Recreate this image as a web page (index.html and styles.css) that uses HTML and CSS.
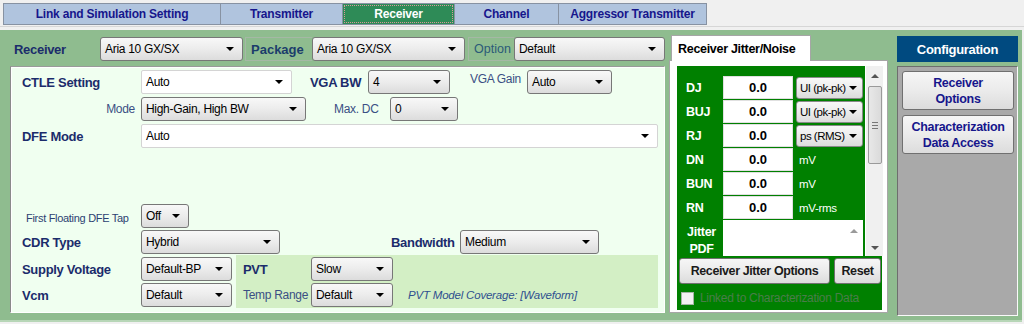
FILE: index.html
```html
<!DOCTYPE html>
<html>
<head>
  <title>Receiver</title>
  <link rel="stylesheet" href="styles.css">
</head>
<body>
  <div class="tabs">
    <div class="tab t-link">Link and Simulation Setting</div>
    <div class="tab t-tx">Transmitter</div>
    <div class="tab t-rx active">Receiver</div>
    <div class="tab t-ch">Channel</div>
    <div class="tab t-ag">Aggressor Transmitter</div>
  </div>

  <div class="main">
    <div class="setup">
      <div class="toprow">
        <div class="lbl top-rx">Receiver</div>
        <div class="combo w143">Aria 10 GX/SX</div>
        <div class="boxlbl pkg">Package</div>
        <div class="combo w153">Aria 10 GX/SX</div>
        <div class="boxlbl opt">Option</div>
        <div class="combo w151">Default</div>
      </div>

      <div class="rx-panel">
        <div class="row">
          <div class="lbl col1">CTLE Setting</div>
          <div class="combo white w151">Auto</div>
          <div class="lbl vgabw">VGA BW</div>
          <div class="combo w82">4</div>
          <div class="lbl-s vgagain">VGA Gain</div>
          <div class="combo w85">Auto</div>
        </div>
        <div class="row mt3">
          <div class="lbl-s col1 right">Mode</div>
          <div class="combo w165">High-Gain, High BW</div>
          <div class="lbl-s maxdc">Max. DC</div>
          <div class="combo w68">0</div>
        </div>
        <div class="row mt3">
          <div class="lbl col1">DFE Mode</div>
          <div class="combo white w516">Auto</div>
        </div>
        <div class="row mt56">
          <div class="lbl-s col1 small">First Floating DFE Tap</div>
          <div class="combo w48">Off</div>
        </div>
        <div class="row mt2">
          <div class="lbl col1">CDR Type</div>
          <div class="combo w139">Hybrid</div>
          <div class="lbl bw">Bandwidth</div>
          <div class="combo w139">Medium</div>
        </div>
        <div class="bottom">
          <div class="bottom-left">
            <div class="row">
              <div class="lbl col1">Supply Voltage</div>
              <div class="combo w91">Default-BP</div>
            </div>
            <div class="row mt2">
              <div class="lbl col1">Vcm</div>
              <div class="combo w91">Default</div>
            </div>
          </div>
          <div class="pvt-band">
            <div class="row">
              <div class="lbl pvtl">PVT</div>
              <div class="combo w82">Slow</div>
            </div>
            <div class="row mt2">
              <div class="lbl-s pvtl">Temp Range</div>
              <div class="combo w82">Default</div>
              <div class="coverage">PVT Model Coverage: [Waveform]</div>
            </div>
          </div>
        </div>
      </div>
    </div>

    <div class="jitter">
      <div class="jtab">Receiver Jitter/Noise</div>
      <div class="jbody">
        <div class="jscroll">
          <div class="jlist">
            <div class="jrow">
              <div class="jlbl">DJ</div>
              <div class="jin">0.0</div>
              <div class="combo junit">UI (pk-pk)</div>
            </div>
            <div class="jrow">
              <div class="jlbl">BUJ</div>
              <div class="jin">0.0</div>
              <div class="combo junit">UI (pk-pk)</div>
            </div>
            <div class="jrow">
              <div class="jlbl">RJ</div>
              <div class="jin">0.0</div>
              <div class="combo junit">ps (RMS)</div>
            </div>
            <div class="jrow">
              <div class="jlbl">DN</div>
              <div class="jin">0.0</div>
              <div class="unit">mV</div>
            </div>
            <div class="jrow">
              <div class="jlbl">BUN</div>
              <div class="jin">0.0</div>
              <div class="unit">mV</div>
            </div>
            <div class="jrow">
              <div class="jlbl">RN</div>
              <div class="jin">0.0</div>
              <div class="unit">mV-rms</div>
            </div>
            <div class="jrow pdf">
              <div class="jlbl two">Jitter<br>PDF</div>
              <div class="pdfbox"><span class="uparrow"></span></div>
            </div>
          </div>
          <div class="vscroll">
            <span class="uparrow"></span>
            <div class="thumb"><span class="grip"></span></div>
            <span class="downarrow"></span>
          </div>
        </div>
        <div class="jbottom">
          <div class="btnrow">
            <div class="btn rjo">Receiver Jitter Options</div>
            <div class="btn reset">Reset</div>
          </div>
          <div class="linked">
            <span class="check"></span>
            <span>Linked to Characterization Data</span>
          </div>
        </div>
      </div>
    </div>

    <div class="config">
      <div class="chead">Configuration</div>
      <div class="cbody">
        <div class="cbtn">Receiver<br>Options</div>
        <div class="cbtn">Characterization<br>Data Access</div>
      </div>
    </div>
  </div>
</body>
</html>
```

FILE: styles.css
```css
body {
  margin: 0;
  background: #f0f0f0;
  font-family: "Liberation Sans", Arial, sans-serif;
  width: 1024px;
  height: 324px;
  overflow: hidden;
}

/* top tabs */
.tabs {
  display: flex;
  padding: 3px 0 0 3px;
  height: 23px;
  border-bottom: 1px solid #d6d6d6;
}

.tab {
  height: 22px;
  box-sizing: border-box;
  border: 1px solid #8792a2;
  background: #b0c4de;
  color: #16168c;
  font-weight: bold;
  font-size: 12px;
  letter-spacing: -0.2px;
  display: flex;
  align-items: center;
  justify-content: center;
  margin-right: -1px;
}

.tab.active {
  background: #2e8b57;
  color: #fff;
  outline: 1px dotted #d89a9a;
  outline-offset: -3px;
}

.t-link { width: 218px; }
.t-tx { width: 123px; }
.t-rx { width: 113px; }
.t-ch { width: 105px; }
.t-ag { width: 149px; }

/* main green area */
.main {
  display: flex;
  margin-top: 3px;
  width: 1022px;
  height: 292px;
  background: #8fbc8f;
  padding-left: 10px;
  box-sizing: border-box;
  border-bottom: 2px solid #b7d6b7;
}

.setup {
  width: 655px;
  margin-top: 7px;
}

.toprow {
  display: flex;
  align-items: center;
  height: 24px;
}

.lbl {
  font-weight: bold;
  font-size: 13px;
  color: #1b2c6b;
  letter-spacing: -0.3px;
  white-space: nowrap;
}

.lbl-s {
  font-size: 12px;
  color: #3a4f84;
  letter-spacing: -0.3px;
  white-space: nowrap;
}

.top-rx {
  width: 90px;
  padding-left: 4px;
  box-sizing: border-box;
  flex-shrink: 0;
}

.boxlbl {
  height: 24px;
  box-sizing: border-box;
  border: 1px solid #a5b8a5;
  border-right: none;
  display: flex;
  align-items: center;
  padding-left: 5px;
  font-size: 13px;
  color: #1b3c6b;
  flex-shrink: 0;
}

.pkg {
  width: 67px;
  margin-left: 2px;
  font-weight: bold;
}

.opt {
  width: 46px;
  margin-left: 3px;
  color: #2b5a78;
  font-size: 12.5px;
}

/* combo boxes */
.combo {
  height: 24px;
  box-sizing: border-box;
  border: 1px solid #777;
  border-radius: 3px;
  background: linear-gradient(#f8f8f8, #ececec 50%, #dcdcdc);
  display: flex;
  align-items: center;
  padding-left: 4px;
  font-size: 12px;
  letter-spacing: -0.3px;
  color: #000;
  flex-shrink: 0;
  white-space: nowrap;
}

.combo::after {
  content: "";
  border-left: 4px solid transparent;
  border-right: 4px solid transparent;
  border-top: 4px solid #000;
  margin-left: auto;
  margin-right: 8px;
}

.combo.white {
  background: #fff;
  border-color: #d4d4d4;
  border-radius: 2px;
}

.w48 { width: 48px; }
.w68 { width: 68px; }
.w82 { width: 82px; }
.w85 { width: 85px; }
.w91 { width: 91px; }
.w139 { width: 139px; }
.w143 { width: 143px; }
.w151 { width: 151px; }
.w153 { width: 153px; }
.w165 { width: 165px; }
.w516 { width: 517px; }

/* receiver settings panel */
.rx-panel {
  margin-top: 5px;
  width: 655px;
  height: 247px;
  box-sizing: border-box;
  background: #f0fff0;
  border: 1px solid;
  border-color: #9a9a9a #fff #fff #8a8a8a;
  box-shadow: inset 1px 1px 0 #ffffff;
  padding: 3px 0 0 11px;
}

.row {
  display: flex;
  align-items: center;
  height: 24px;
}

.mt2 { margin-top: 2px; }
.mt3 { margin-top: 3px; }
.mt56 { margin-top: 56px; }

.col1 {
  width: 119px;
  flex-shrink: 0;
}

.right {
  text-align: right;
  padding-right: 6px;
  box-sizing: border-box;
}

.small {
  font-size: 11px;
  color: #2c3f72;
  padding-left: 4px;
  box-sizing: border-box;
  padding-top: 4px;
}

.vgabw { width: 58px; margin-left: 18px; }
.vgagain { width: 57px; margin-left: 20px; margin-bottom: 6px; }
.maxdc { width: 56px; margin-left: 28px; }
.bw { width: 69px; margin-left: 111px; }

.bottom {
  display: flex;
  margin-top: 1px;
}

.bottom-left {
  width: 214px;
  padding-top: 2px;
}

.pvt-band {
  width: 422px;
  height: 53px;
  background: #d3efc5;
  padding: 2px 0 0 7px;
  box-sizing: border-box;
}

.pvtl { width: 68px; }

.coverage {
  margin-left: 15px;
  font-size: 11.5px;
  font-style: italic;
  color: #2f4f8f;
  letter-spacing: -0.2px;
}

/* jitter/noise tab */
.jitter {
  width: 219px;
  margin: 5px 0 0 4px;
  display: flex;
  flex-direction: column;
}

.jtab {
  width: 140px;
  height: 26px;
  margin-left: 2px;
  background: #fff;
  border: 1px solid #a6a6a6;
  border-bottom: none;
  box-sizing: border-box;
  display: flex;
  align-items: center;
  padding-left: 6px;
  font-weight: bold;
  font-size: 12.5px;
  letter-spacing: -0.3px;
  position: relative;
  z-index: 1;
}

.jbody {
  height: 253px;
  margin-top: -1px;
  background: #fff;
  border: 1px solid #a6a6a6;
  box-sizing: border-box;
  padding: 5px 0 0 7px;
}

.jscroll {
  display: flex;
  height: 190px;
}

.jlist {
  width: 188px;
  background: #008000;
  padding-top: 10px;
  box-sizing: border-box;
  overflow: hidden;
}

.jrow {
  display: flex;
  align-items: center;
  height: 23px;
  margin-bottom: 1px;
}

.jlbl {
  width: 46px;
  flex-shrink: 0;
  padding-left: 9px;
  box-sizing: border-box;
  color: #fff;
  font-weight: bold;
  font-size: 12.5px;
  letter-spacing: -0.3px;
}

.jlbl.two {
  padding-left: 3px;
  text-align: center;
  line-height: 17px;
  padding-top: 4px;
}

.jin {
  width: 70px;
  height: 23px;
  box-sizing: border-box;
  background: #fff;
  border: 1px solid #e0e0e0;
  display: flex;
  align-items: center;
  justify-content: center;
  font-weight: bold;
  font-size: 13px;
  flex-shrink: 0;
}

.junit {
  width: 67px;
  height: 22px;
  margin-left: 3px;
  padding-left: 3px;
  border-color: #8a8a8a;
  font-size: 11.5px;
  letter-spacing: -0.5px;
}

.junit::after {
  margin-right: 5px;
}

.unit {
  margin-left: 6px;
  color: #fff;
  font-size: 11.5px;
  letter-spacing: -0.3px;
}

.jrow.pdf {
  height: 40px;
  align-items: flex-start;
  margin-top: 1px;
}

.pdfbox {
  width: 140px;
  height: 40px;
  background: #fff;
  display: flex;
  justify-content: flex-end;
  padding: 9px 5px 0 0;
  box-sizing: border-box;
}

.uparrow {
  width: 0;
  height: 0;
  border-left: 4px solid transparent;
  border-right: 4px solid transparent;
  border-bottom: 4px solid #9a9a9a;
}

.downarrow {
  width: 0;
  height: 0;
  border-left: 4px solid transparent;
  border-right: 4px solid transparent;
  border-top: 4px solid #555;
  margin-top: auto;
  margin-bottom: 6px;
}

.vscroll {
  width: 17px;
  margin-left: 1px;
  background: #f0f0f0;
  display: flex;
  flex-direction: column;
  align-items: center;
  padding-top: 8px;
  box-sizing: border-box;
}

.vscroll .uparrow {
  border-bottom-color: #555;
}

.thumb {
  width: 14px;
  height: 78px;
  margin-top: 8px;
  box-sizing: border-box;
  border: 1px solid #9a9a9a;
  border-radius: 2px;
  background: linear-gradient(to right, #e8e8e8, #dadada);
  display: flex;
  align-items: center;
  justify-content: center;
}

.grip {
  width: 6px;
  height: 5px;
  border-top: 1px solid #777;
  border-bottom: 1px solid #777;
  background: linear-gradient(#777, #777) center / 6px 1px no-repeat;
}

.jbottom {
  width: 205px;
  height: 54px;
  background: #008000;
  padding: 2px 0 0 2px;
  box-sizing: border-box;
}

.btnrow {
  display: flex;
  gap: 4px;
}

.btn {
  height: 26px;
  box-sizing: border-box;
  border: 1px solid #707070;
  border-radius: 3px;
  background: linear-gradient(#f6f6f6, #ebebeb 50%, #dcdcdc);
  display: flex;
  align-items: center;
  justify-content: center;
  font-weight: bold;
  font-size: 12.5px;
  letter-spacing: -0.4px;
  color: #1a1a1a;
}

.rjo { width: 151px; }
.reset { width: 47px; }

.linked {
  display: flex;
  align-items: center;
  margin: 7px 0 0 2px;
  color: #4a7d4a;
  font-size: 12px;
  letter-spacing: -0.3px;
}

.check {
  width: 13px;
  height: 13px;
  box-sizing: border-box;
  border: 1px solid #a5b5a5;
  background: #f2f2f2;
  margin-right: 6px;
}

/* configuration */
.config {
  width: 121px;
  margin: 6px 0 0 9px;
}

.chead {
  height: 26px;
  background: #004a80;
  color: #fff;
  font-weight: bold;
  font-size: 13px;
  letter-spacing: -0.3px;
  display: flex;
  align-items: center;
  justify-content: center;
}

.cbody {
  margin-top: 4px;
  height: 250px;
  box-sizing: border-box;
  background: #a9a9a9;
  border: 1px solid;
  border-color: #6e6e6e #fafafa #fafafa #6e6e6e;
  padding: 4px 0 0 4px;
  display: flex;
  flex-direction: column;
  gap: 5px;
}

.cbtn {
  width: 112px;
  height: 39px;
  box-sizing: border-box;
  border: 1px solid #707070;
  border-radius: 3px;
  background: linear-gradient(#f6f6f6, #ebebeb 50%, #dcdcdc);
  color: #16168c;
  font-weight: bold;
  font-size: 12.5px;
  letter-spacing: -0.3px;
  line-height: 16px;
  text-align: center;
  display: flex;
  align-items: center;
  justify-content: center;
}
```
